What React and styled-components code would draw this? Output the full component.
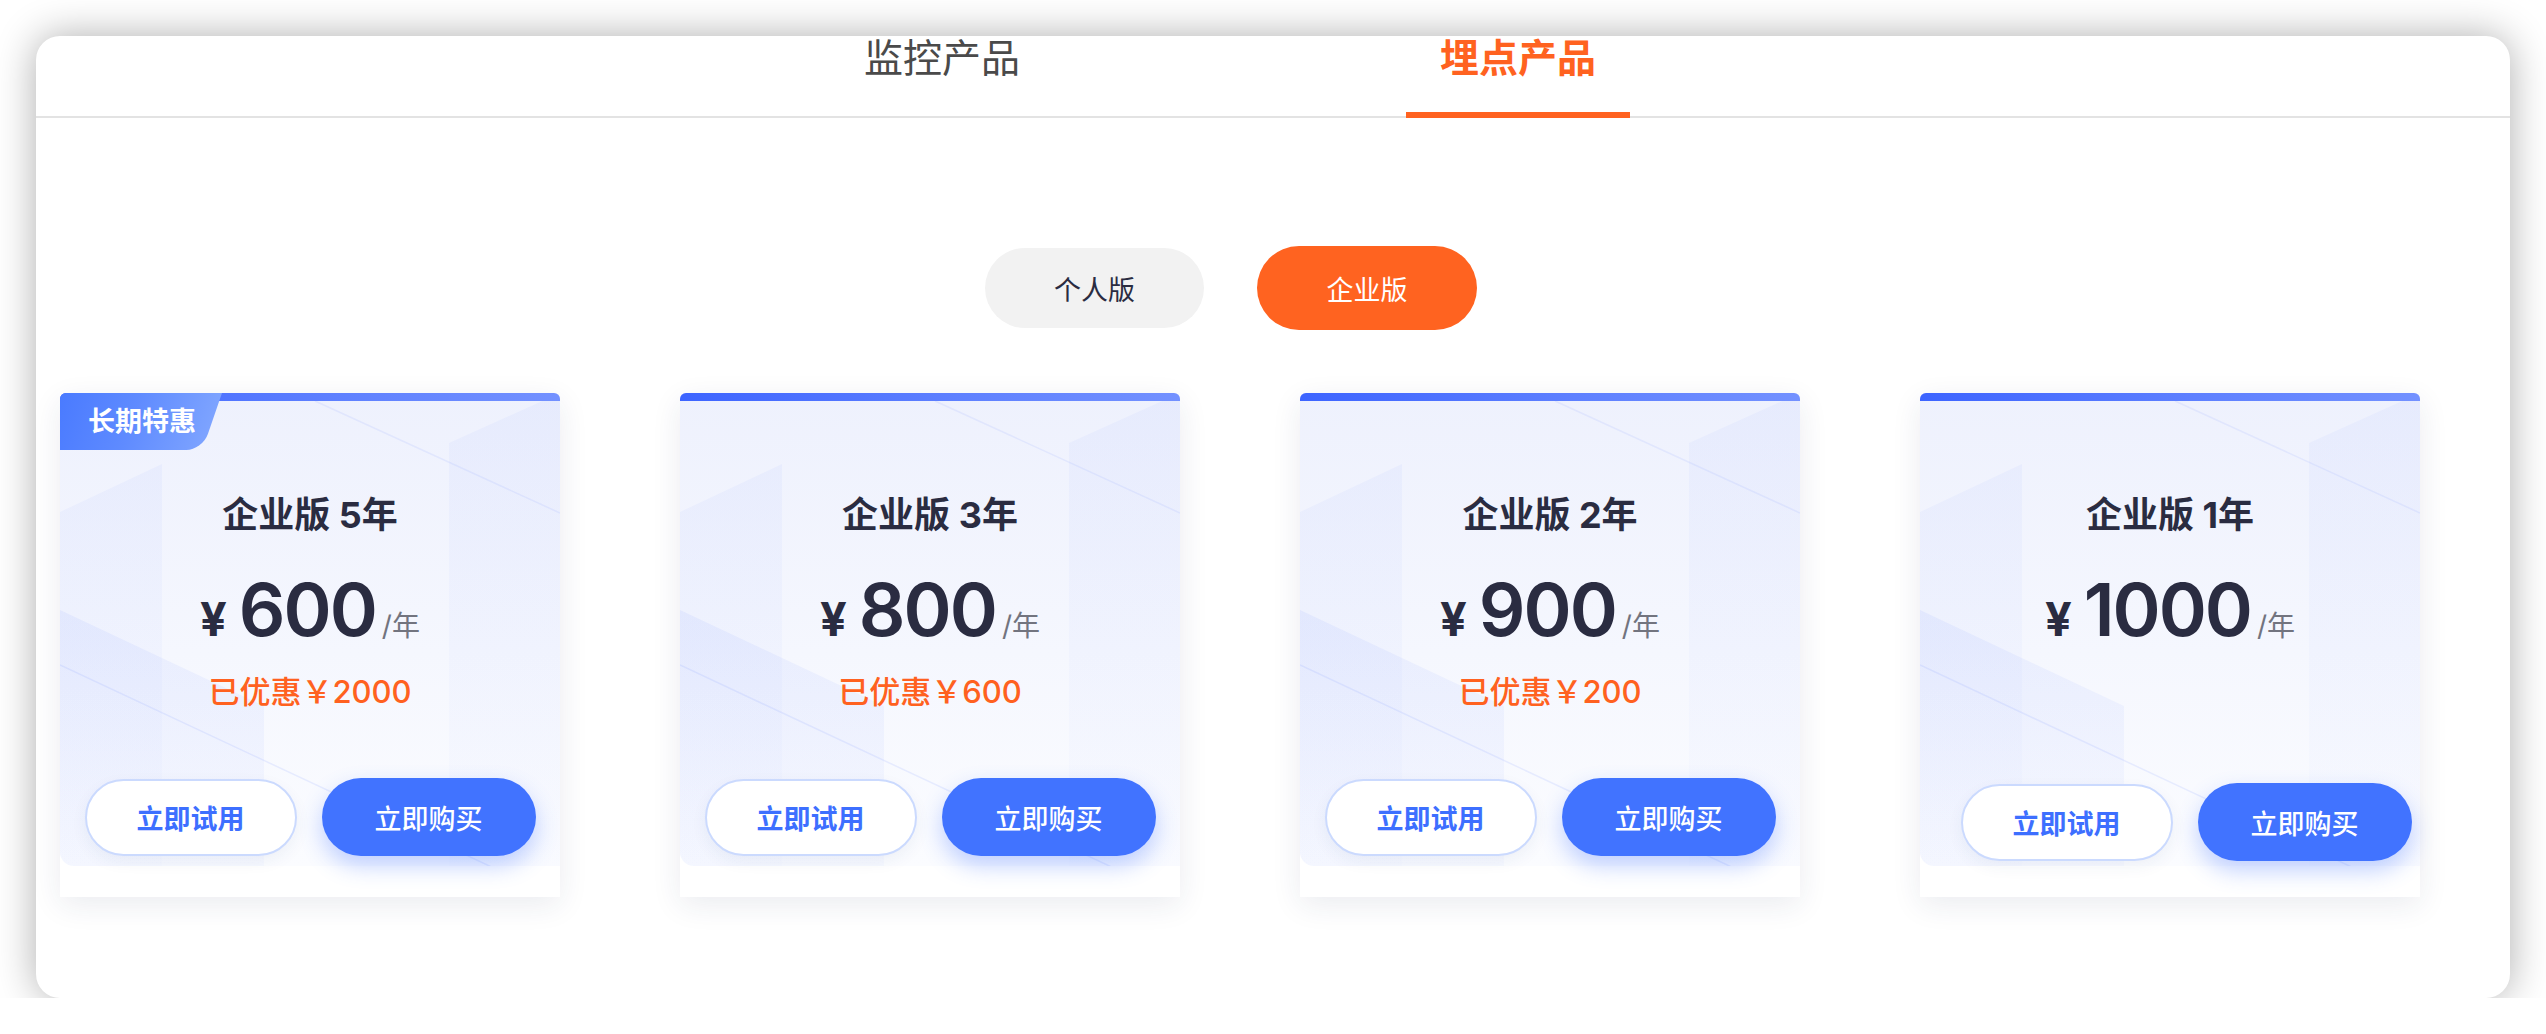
import React, { useState } from 'react';
import styled, { createGlobalStyle } from 'styled-components';

const Global = createGlobalStyle`
  html, body {
    margin: 0;
    padding: 0;
    background: #ffffff;
  }
  body {
    font-family: Inter, "Noto Sans CJK SC", sans-serif;
    color: #2a2c41;
  }
  * { box-sizing: border-box; }
`;

const Page = styled.div`
  padding: 36px 36px 0 36px;
`;

const Panel = styled.div`
  height: 962px;
  background: #fff;
  border-radius: 24px;
  box-shadow: 0 0 40px 0 rgba(0, 0, 0, 0.32);
`;

const TabBar = styled.div`
  display: flex;
  justify-content: center;
  gap: 352px;
  height: 82px;
  padding-right: 86px;
  box-shadow: inset 0 -2px 0 #e3e3e3;
`;

const Tab = styled.div`
  width: 224px;
  height: 82px;
  padding-top: 2px;
  text-align: center;
  font-size: 39px;
  line-height: 39px;
  font-weight: ${p => (p.$active ? 700 : 400)};
  color: ${p => (p.$active ? '#ff6220' : '#4a4a4a')};
  border-bottom: 6px solid ${p => (p.$active ? '#ff6220' : 'transparent')};
  cursor: pointer;
`;

const Switch = styled.div`
  display: flex;
  justify-content: center;
  align-items: center;
  gap: 53px;
  height: 84px;
  margin-top: 128px;
  padding-right: 84px;
`;

const SwitchButton = styled.button`
  width: ${p => (p.$active ? 220 : 219)}px;
  height: ${p => (p.$active ? 84 : 80)}px;
  border: none;
  border-radius: 42px;
  background: ${p => (p.$active ? '#ff6320' : '#f2f2f2')};
  color: ${p => (p.$active ? '#ffffff' : '#2a2c41')};
  font-family: inherit;
  font-size: 27px;
  cursor: pointer;
`;

const CardRow = styled.div`
  display: flex;
  gap: 120px;
  margin-top: 63px;
  padding-left: 24px;
`;

const Card = styled.div`
  position: relative;
  width: 500px;
  height: 504px;
  display: flex;
  flex-direction: column;
  align-items: center;
  background: #fff;
  border-radius: 6px 6px 0 0;
  box-shadow: 0 8px 30px rgba(30, 40, 90, 0.09);
`;

const CardArt = styled.svg`
  position: absolute;
  top: 0;
  left: 0;
  width: 500px;
  height: 473px;
  border-radius: 6px 6px 0 14px;
`;

const TopBar = styled.div`
  position: relative;
  width: 100%;
  height: 8px;
  border-radius: 6px 6px 0 0;
  background: linear-gradient(90deg, #3d64ff 0%, #5e80ff 55%, #7391ff 100%);
`;

const Badge = styled.div`
  position: absolute;
  top: 0;
  left: 0;
  width: 162px;
  height: 57px;
  padding-left: 28px;
  overflow: hidden;
  border-top-left-radius: 6px;
  color: #fff;
  font-size: 27px;
  font-weight: 700;
  line-height: 57px;
  z-index: 2;

  &::before {
    content: '';
    position: absolute;
    top: 0;
    bottom: 0;
    left: -40px;
    right: 0;
    transform: skewX(-19deg);
    transform-origin: top right;
    border-bottom-right-radius: 16px;
    background: linear-gradient(90deg, #3f72ff 0%, #5f8bff 60%, #7da3ff 100%);
  }

  span {
    position: relative;
  }
`;

const Title = styled.div`
  position: relative;
  margin-top: 96px;
  font-size: 36px;
  line-height: 36px;
  font-weight: 700;
  color: #2a2c41;
`;

const Price = styled.div`
  position: relative;
  display: flex;
  align-items: baseline;
  margin-top: 40px;
  font-size: 72px;
  line-height: 1;
  color: #2a2c41;
`;

const Yen = styled.span`
  font-size: 47px;
  font-weight: 700;
  margin-right: 12px;
`;

const Amount = styled.span`
  font-size: 73px;
  font-weight: 600;
  letter-spacing: -2px;
`;

const Unit = styled.span`
  font-size: 28px;
  color: #72747f;
  margin-left: 6px;
`;

const Discount = styled.div`
  position: relative;
  margin-top: 30px;
  font-size: 31px;
  line-height: 1;
  font-weight: 500;
  color: #ff6120;
`;

const Actions = styled.div`
  position: relative;
  display: flex;
  align-items: center;
  gap: 25px;
  margin-top: auto;
  margin-bottom: ${p => (p.$shift ? 36 : 41)}px;
  padding-left: ${p => (p.$shift ? 32 : 0)}px;
`;

const TryButton = styled.button`
  width: 212px;
  height: 77px;
  border: 2px solid #cbdafe;
  border-radius: 40px;
  background: #fff;
  color: #3d6fff;
  font-family: inherit;
  font-size: 27px;
  font-weight: 700;
  box-shadow: 0 6px 16px rgba(40, 60, 120, 0.06);
  cursor: pointer;
`;

const BuyButton = styled.button`
  width: 214px;
  height: 78px;
  border: none;
  border-radius: 40px;
  background: #4173ff;
  color: #fff;
  font-family: inherit;
  font-size: 27px;
  font-weight: 500;
  box-shadow: 0 10px 22px rgba(65, 115, 255, 0.32);
  cursor: pointer;
`;

const Art = ({ id }) => (
  <CardArt viewBox="0 0 500 473" preserveAspectRatio="none">
    <defs>
      <linearGradient id={`bg${id}`} x1="0" y1="0" x2="0" y2="1">
        <stop offset="0" stopColor="#eef1fd" />
        <stop offset="0.55" stopColor="#f5f7fe" />
        <stop offset="1" stopColor="#fbfcff" />
      </linearGradient>
      <linearGradient id={`bd${id}`} x1="0" y1="0" x2="0" y2="1">
        <stop offset="0" stopColor="#6a88ff" stopOpacity="0.06" />
        <stop offset="1" stopColor="#6a88ff" stopOpacity="0.015" />
      </linearGradient>
      <linearGradient id={`lo${id}`} x1="0" y1="0" x2="0" y2="1">
        <stop offset="0" stopColor="#6a88ff" stopOpacity="0.09" />
        <stop offset="1" stopColor="#6a88ff" stopOpacity="0.035" />
      </linearGradient>
    </defs>
    <rect x="0" y="0" width="500" height="473" fill={`url(#bg${id})`} />
    <polygon points="0,119 102,71 102,473 0,473" fill={`url(#bd${id})`} />
    <polygon points="0,217 204,313 204,473 0,473" fill={`url(#lo${id})`} />
    <polygon points="389,50 500,0 500,473 389,473" fill={`url(#bd${id})`} />
    <line x1="255" y1="8" x2="500" y2="120" stroke="#7a96ff" strokeOpacity="0.12" strokeWidth="1.5" />
    <line x1="0" y1="272" x2="500" y2="506" stroke="#7a96ff" strokeOpacity="0.14" strokeWidth="1.5" />
  </CardArt>
);

const plans = [
  { years: 5, price: 600, save: 2000, badge: true },
  { years: 3, price: 800, save: 600 },
  { years: 2, price: 900, save: 200 },
  { years: 1, price: 1000, shift: true },
];

export default function App() {
  const [tab, setTab] = useState(1);
  const [edition, setEdition] = useState(1);

  return (
    <Page>
      <Global />
      <Panel>
        <TabBar>
          {['监控产品', '埋点产品'].map((t, i) => (
            <Tab key={t} $active={tab === i} onClick={() => setTab(i)}>
              {t}
            </Tab>
          ))}
        </TabBar>
        <Switch>
          {['个人版', '企业版'].map((t, i) => (
            <SwitchButton key={t} $active={edition === i} onClick={() => setEdition(i)}>
              {t}
            </SwitchButton>
          ))}
        </Switch>
        <CardRow>
          {plans.map((p, i) => (
            <Card key={p.years}>
              <Art id={i} />
              <TopBar />
              {p.badge && (
                <Badge>
                  <span>长期特惠</span>
                </Badge>
              )}
              <Title>企业版 {p.years}年</Title>
              <Price>
                <Yen>¥</Yen>
                <Amount>{p.price}</Amount>
                <Unit>/年</Unit>
              </Price>
              {p.save && <Discount>已优惠￥{p.save}</Discount>}
              <Actions $shift={p.shift}>
                <TryButton>立即试用</TryButton>
                <BuyButton>立即购买</BuyButton>
              </Actions>
            </Card>
          ))}
        </CardRow>
      </Panel>
    </Page>
  );
}
